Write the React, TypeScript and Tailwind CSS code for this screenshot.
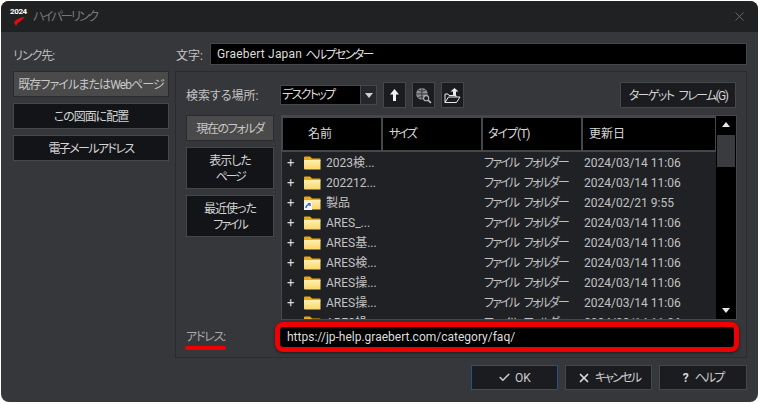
import { Check, X } from 'lucide-react';

const ROWS = [
  { name: '2023検...', date: '2024/03/14 11:06' },
  { name: '202212...', date: '2024/03/14 11:06' },
  { name: '製品', date: '2024/02/21 9:55', shortcut: true },
  { name: 'ARES_...', date: '2024/03/14 11:06' },
  { name: 'ARES基...', date: '2024/03/14 11:06' },
  { name: 'ARES検...', date: '2024/03/14 11:06' },
  { name: 'ARES操...', date: '2024/03/14 11:06' },
  { name: 'ARES操...', date: '2024/03/14 11:06' },
  { name: 'ARES操...', date: '2024/03/14 11:06' },
];

function FolderIcon({ shortcut }: { shortcut?: boolean }) {
  return (
    <svg width="17" height="14" viewBox="0 0 17 14" className="shrink-0">
      <defs>
        <linearGradient id="folderFill" x1="0" y1="0" x2="0" y2="1">
          <stop offset="0" stopColor="#fff0b0" />
          <stop offset="1" stopColor="#fbd568" />
        </linearGradient>
      </defs>
      <path d="M0 1.5 Q0 0.5 1 0.5 H6 L8 2.5 H16 Q16.5 2.5 16.5 3 V5 H0 Z" fill="#eba80f" />
      <path d="M0 4 H16 Q16.5 4 16.5 4.5 V13 Q16.5 13.5 16 13.5 H1 Q0 13.5 0 12.5 Z" fill="url(#folderFill)" />
      {shortcut && (
        <g>
          <rect x="0" y="6" width="8" height="8" fill="#f4f4f4" />
          <path d="M2 12 Q2 9 5 8.6 M3.8 7.8 H6 V10" fill="none" stroke="#1f6fd0" strokeWidth="1.4" />
        </g>
      )}
    </svg>
  );
}

function SideButton({ children, active, className }: { children: React.ReactNode; active?: boolean; className?: string }) {
  return (
    <div
      className={`flex items-center justify-center whitespace-nowrap border pt-px text-center leading-[16px] ${
        active ? 'border-[#2a2b2e] bg-[#4a4a4a] text-[#c8c8c8]' : 'border-[#46474a] bg-[#131418] text-[#d4d4d4]'
      } ${className ?? ''}`}
    >
      <div>{children}</div>
    </div>
  );
}

function ToolButton({ children }: { children: React.ReactNode }) {
  return (
    <div className="flex h-[26px] w-[23px] items-center justify-center border border-[#46474a] bg-[#1b1c20]">
      {children}
    </div>
  );
}

export default function App() {
  return (
    <div className="h-[404px] w-[760px] overflow-hidden bg-white pl-px pt-px font-['Roboto','Noto_Sans_CJK_JP',sans-serif] text-[12px] text-[#d0d0d0] [font-feature-settings:'palt']">
      <div className="h-[401px] w-[757px] overflow-hidden rounded-lg bg-[#36373b]">
        {/* Title bar */}
        <div className="flex h-[31px] items-center bg-[#202122] pl-[9px] pr-[11px]">
          <div className="h-[20px] w-[16px] shrink-0">
            <div className="text-[8px] font-bold leading-[9px] tracking-[-0.4px] text-white">2024</div>
            <svg width="11" height="9" viewBox="0 0 11 9" className="ml-[4px] mt-px">
              <path d="M11 0 Q5 0 0 5 L2 9 Q4 5 8 3 Z" fill="#e00d0d" />
            </svg>
          </div>
          <span className="ml-[7px] pt-[2px] text-[12.5px] tracking-[-2.2px] text-[#77787a]">ハイパーリンク</span>
          <X className="ml-auto h-[15px] w-[15px] text-[#77787a]" strokeWidth={1.25} />
        </div>

        <div className="flex pl-3 pr-[10px] pt-[11px]">
          {/* Link target column */}
          <div className="flex w-[156px] flex-col gap-[6px]">
            <div className="flex h-[22px] items-center pt-[3px] tracking-[-1px] text-[#bdbdbd]">リンク先:</div>
            <SideButton active className="h-[26px] tracking-[-0.9px]">既存ファイルまたはWebページ</SideButton>
            <SideButton className="h-[26px] tracking-[-1px]">この図面に配置</SideButton>
            <SideButton className="h-[26px] tracking-[-1.6px]">電子メールアドレス</SideButton>
          </div>

          <div className="ml-[6px] flex w-[572px] flex-col gap-[6px]">
            <div className="flex h-[22px] items-center">
              <span className="w-[35px] pl-px pt-[3px] text-[#c4c4c4]">文字:</span>
              <div className="flex h-full flex-1 items-center border border-[#46474a] bg-black pl-[6px] text-[#dddddd]">
                <span className="whitespace-pre tracking-[0.2px]">Graebert Japan </span>
                <span className="pt-px tracking-[-1.6px]">ヘルプセンター</span>
              </div>
            </div>

            {/* Browse panel */}
            <div className="flex h-[287px] flex-col border border-[#2a2b2e] pl-[10px] pr-[9px] pt-[10px]">
              <div className="flex h-[26px] items-center">
                <span className="w-[94px] pt-[2px] text-[#c4c4c4]">検索する場所:</span>
                <div className="flex h-[20px] w-[97px] border border-[#46474a] bg-black">
                  <span className="flex-1 pl-px leading-[19px] tracking-[-1.7px] text-[#dddddd]">デスクトップ</span>
                  <div className="flex w-[16px] items-center justify-center border-l border-[#46474a] bg-[#26272a]">
                    <div className="h-0 w-0 border-x-[4px] border-t-[5px] border-x-transparent border-t-[#cfcfcf]" />
                  </div>
                </div>
                <div className="ml-[6px] flex gap-[6px]">
                  <ToolButton>
                    <svg width="11" height="14" viewBox="0 0 11 14">
                      <path d="M5.5 1 L10 6.5 H7 V13 H4 V6.5 H1 Z" fill="#f2f2f2" />
                    </svg>
                  </ToolButton>
                  <ToolButton>
                    <svg width="17" height="17" viewBox="0 0 16 16" fill="none">
                      <circle cx="6.5" cy="6.5" r="5.5" fill="#8d8e90" />
                      <path d="M1 6.5 H12 M6.5 1 V12 M3 3 Q6.5 5 10 3 M3 10 Q6.5 8 10 10" stroke="#2b2c2f" strokeWidth="0.8" />
                      <circle cx="10.5" cy="10.5" r="2.4" fill="#1b1c20" stroke="#b4b5b7" strokeWidth="1" />
                      <path d="M12.5 12.5 L15 15" stroke="#b4b5b7" strokeWidth="1.6" />
                    </svg>
                  </ToolButton>
                  <ToolButton>
                    <svg width="17" height="17" viewBox="0 0 17 17" fill="none">
                      <path d="M1 15.5 V7 H4 L5 8.5 H12 V10" stroke="#e8e8e8" strokeWidth="1" />
                      <path d="M1 15.5 H12.5 L16 10 H4.5 Z" stroke="#e8e8e8" strokeWidth="1" />
                      <path d="M10.5 1 L14.5 4.5 H12 V8 H9 V4.5 H6.5 Z" fill="#e8e8e8" />
                    </svg>
                  </ToolButton>
                </div>
                <SideButton className="ml-auto mr-px h-[26px] w-[116px] tracking-[-1.6px] [word-spacing:4px] !bg-[#1b1c20]">ターゲット フレーム(G)</SideButton>
              </div>

              <div className="mt-[7px] flex h-[205px]">
                <div className="flex w-[88px] flex-col gap-[6px]">
                  <SideButton active className="h-[26px] tracking-[-1.4px]">現在のフォルダ</SideButton>
                  <SideButton className="h-[42px] tracking-[-1px]">表示した<br /><span className="tracking-[-2.2px]">ページ</span></SideButton>
                  <SideButton className="h-[42px] tracking-[-1px]">最近使った<br /><span className="tracking-[-2px]">ファイル</span></SideButton>
                </div>

                {/* File list */}
                <div className="ml-[7px] flex w-[456px] border border-[#46474a] bg-[#202125]">
                  <div className="min-w-0 flex-1 overflow-hidden">
                    <div className="flex h-[36px] gap-[2px] border-b-[2px] border-[#46474a] bg-[#46474a] pl-px pt-[2px] text-[#d8d8d8]">
                      <div className="flex w-[98px] items-center bg-black pl-[25px]">名前</div>
                      <div className="flex w-[98px] items-center bg-black pl-[6px] tracking-[-2px]">サイズ</div>
                      <div className="flex w-[98px] items-center bg-black pl-[5px] tracking-[-1px]">タイプ(T)</div>
                      <div className="flex w-[132px] items-center bg-black pl-[6px]">更新日</div>
                    </div>
                    {ROWS.map((row, i) => (
                      <div key={i} className="flex h-[20px] items-center pt-px text-[#c2c2c2]">
                        <span className="w-[22px] pl-[5px] text-[13px] text-[#d8d8d8]">+</span>
                        <FolderIcon shortcut={row.shortcut} />
                        <span className="ml-[5px] w-[158px]">{row.name}</span>
                        <span className="w-[100px] tracking-[-1.8px] [word-spacing:4px]">ファイル フォルダー</span>
                        <span>{row.date}</span>
                      </div>
                    ))}
                  </div>
                  {/* Scrollbar */}
                  <div className="flex w-[20px] flex-col items-center bg-black px-px pt-[6px]">
                    <div className="h-0 w-0 border-x-[4px] border-b-[5px] border-x-transparent border-b-[#e8e8e8]" />
                    <div className="mt-[8px] h-[32px] w-full bg-[#3a3b3f]" />
                    <div className="mb-[6px] mt-auto h-0 w-0 border-x-[4px] border-t-[5px] border-x-transparent border-t-[#e8e8e8]" />
                  </div>
                </div>
              </div>

              <div className="mt-[2px] flex h-[30px] items-center">
                <div className="relative w-[89px] tracking-[-1.2px] text-[#a8a8a8]">
                  アドレス:
                  <div className="absolute left-[-1px] top-[18px] h-[4px] w-[41px] rounded-full bg-[#f00000]" />
                </div>
                <div className="-mr-[2px] flex h-full flex-1 items-center rounded-lg border-[5px] border-[#f00000] bg-black pl-[7px] text-[#dddddd] shadow-[0_1px_3px_rgba(0,0,0,0.5)]">
                  https://jp-help.graebert.com/category/faq/
                </div>
              </div>
            </div>

            {/* Dialog buttons */}
            <div className="mt-px flex h-[25px] justify-end gap-[7px]">
              <div className="flex w-[87px] items-center justify-center gap-[4px] border border-[#2a4f86] bg-[#1b1c20] text-[#cccccc]">
                <Check className="h-[13px] w-[13px] text-[#c8c8c8]" strokeWidth={3} />
                OK
              </div>
              <div className="flex w-[87px] items-center justify-center gap-[4px] border border-[#46474a] bg-[#1b1c20] tracking-[-1.8px] text-[#cccccc]">
                <X className="h-[14px] w-[14px] text-[#d8d8d8]" strokeWidth={3} />
                キャンセル
              </div>
              <div className="flex w-[88px] items-center justify-center gap-[8px] border border-[#46474a] bg-[#1b1c20] tracking-[-2px] text-[#cccccc]">
                <span className="font-bold text-[#d8d8d8]">?</span>
                ヘルプ
              </div>
            </div>
          </div>
        </div>
      </div>
    </div>
  );
}
